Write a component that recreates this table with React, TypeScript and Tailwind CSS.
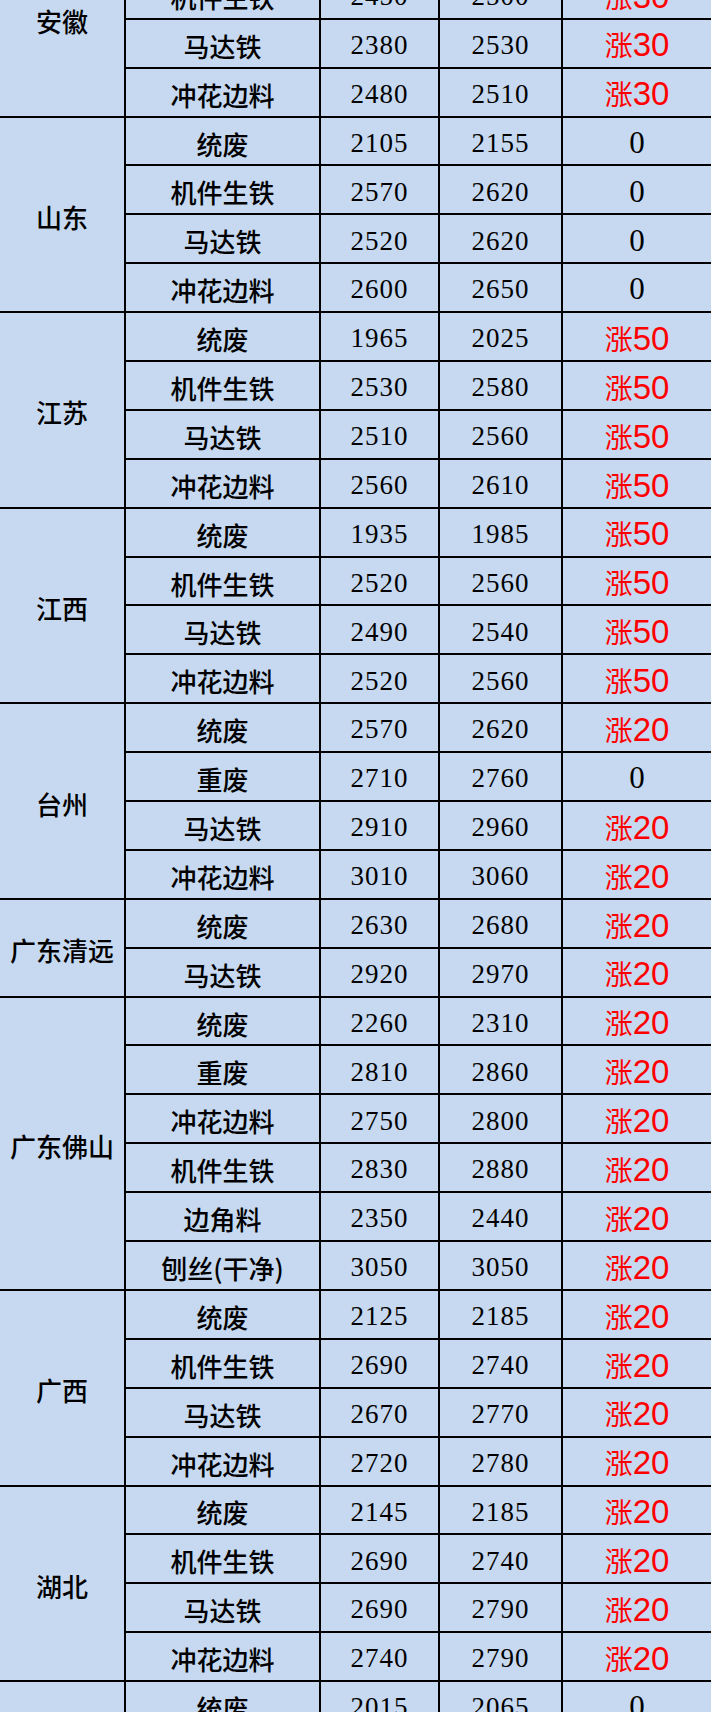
const groups: { region: string; span: string; rows: [string, string, string, string][] }[] = [
  {
    region: '安徽',
    span: 'row-span-4',
    rows: [
      ['统废', '1965', '2015', '涨30'],
      ['机件生铁', '2450', '2500', '涨30'],
      ['马达铁', '2380', '2530', '涨30'],
      ['冲花边料', '2480', '2510', '涨30'],
    ],
  },
  {
    region: '山东',
    span: 'row-span-4',
    rows: [
      ['统废', '2105', '2155', '0'],
      ['机件生铁', '2570', '2620', '0'],
      ['马达铁', '2520', '2620', '0'],
      ['冲花边料', '2600', '2650', '0'],
    ],
  },
  {
    region: '江苏',
    span: 'row-span-4',
    rows: [
      ['统废', '1965', '2025', '涨50'],
      ['机件生铁', '2530', '2580', '涨50'],
      ['马达铁', '2510', '2560', '涨50'],
      ['冲花边料', '2560', '2610', '涨50'],
    ],
  },
  {
    region: '江西',
    span: 'row-span-4',
    rows: [
      ['统废', '1935', '1985', '涨50'],
      ['机件生铁', '2520', '2560', '涨50'],
      ['马达铁', '2490', '2540', '涨50'],
      ['冲花边料', '2520', '2560', '涨50'],
    ],
  },
  {
    region: '台州',
    span: 'row-span-4',
    rows: [
      ['统废', '2570', '2620', '涨20'],
      ['重废', '2710', '2760', '0'],
      ['马达铁', '2910', '2960', '涨20'],
      ['冲花边料', '3010', '3060', '涨20'],
    ],
  },
  {
    region: '广东清远',
    span: 'row-span-2',
    rows: [
      ['统废', '2630', '2680', '涨20'],
      ['马达铁', '2920', '2970', '涨20'],
    ],
  },
  {
    region: '广东佛山',
    span: 'row-span-6',
    rows: [
      ['统废', '2260', '2310', '涨20'],
      ['重废', '2810', '2860', '涨20'],
      ['冲花边料', '2750', '2800', '涨20'],
      ['机件生铁', '2830', '2880', '涨20'],
      ['边角料', '2350', '2440', '涨20'],
      ['刨丝(干净)', '3050', '3050', '涨20'],
    ],
  },
  {
    region: '广西',
    span: 'row-span-4',
    rows: [
      ['统废', '2125', '2185', '涨20'],
      ['机件生铁', '2690', '2740', '涨20'],
      ['马达铁', '2670', '2770', '涨20'],
      ['冲花边料', '2720', '2780', '涨20'],
    ],
  },
  {
    region: '湖北',
    span: 'row-span-4',
    rows: [
      ['统废', '2145', '2185', '涨20'],
      ['机件生铁', '2690', '2740', '涨20'],
      ['马达铁', '2690', '2790', '涨20'],
      ['冲花边料', '2740', '2790', '涨20'],
    ],
  },
  {
    region: '河南',
    span: 'row-span-4',
    rows: [
      ['统废', '2015', '2065', '0'],
      ['机件生铁', '2560', '2610', '0'],
      ['马达铁', '2540', '2600', '0'],
      ['冲花边料', '2580', '2630', '0'],
    ],
  },
];

const cell = 'flex items-center justify-center border-b-2 border-black';
const cjk = "font-['Noto_Sans_CJK_SC',sans-serif] font-medium text-[26px]";
const num = "font-['Liberation_Serif',serif] text-[27px] tracking-[1px]";

function Change({ value }: { value: string }) {
  if (value.startsWith('涨')) {
    return (
      <span className="flex items-baseline text-[#ff0000]">
        <span className="font-['Noto_Sans_CJK_SC',sans-serif] text-[28px]">涨</span>
        <span className="font-['Liberation_Sans',sans-serif] text-[33px]">{value.slice(1)}</span>
      </span>
    );
  }
  return <span className="font-['Liberation_Serif',serif] text-[31px] font-medium text-black">{value}</span>;
}

export default function App() {
  return (
    <div className="w-[711px] h-[1712px] overflow-hidden bg-[#c6d9f0]">
      <div className="-mt-[78px] grid grid-cols-[126px_195px_119px_123px_148px] auto-rows-[48.9px] text-black">
        {groups.map((g) => (
          <>
            <div key={g.region} className={`${g.span} ${cell} border-r-2 ${cjk} pt-1`}>
              {g.region}
            </div>
            {g.rows.map((r, i) => (
              <>
                <div key={g.region + i + 'a'} className={`${cell} border-r-2 ${cjk} pt-1`}>
                  {r[0]}
                </div>
                <div key={g.region + i + 'b'} className={`${cell} border-r-2 ${num} pt-1`}>
                  {r[1]}
                </div>
                <div key={g.region + i + 'c'} className={`${cell} border-r-2 ${num} pt-1`}>
                  {r[2]}
                </div>
                <div key={g.region + i + 'd'} className={`${cell} pt-1`}>
                  <Change value={r[3]} />
                </div>
              </>
            ))}
          </>
        ))}
      </div>
    </div>
  );
}
